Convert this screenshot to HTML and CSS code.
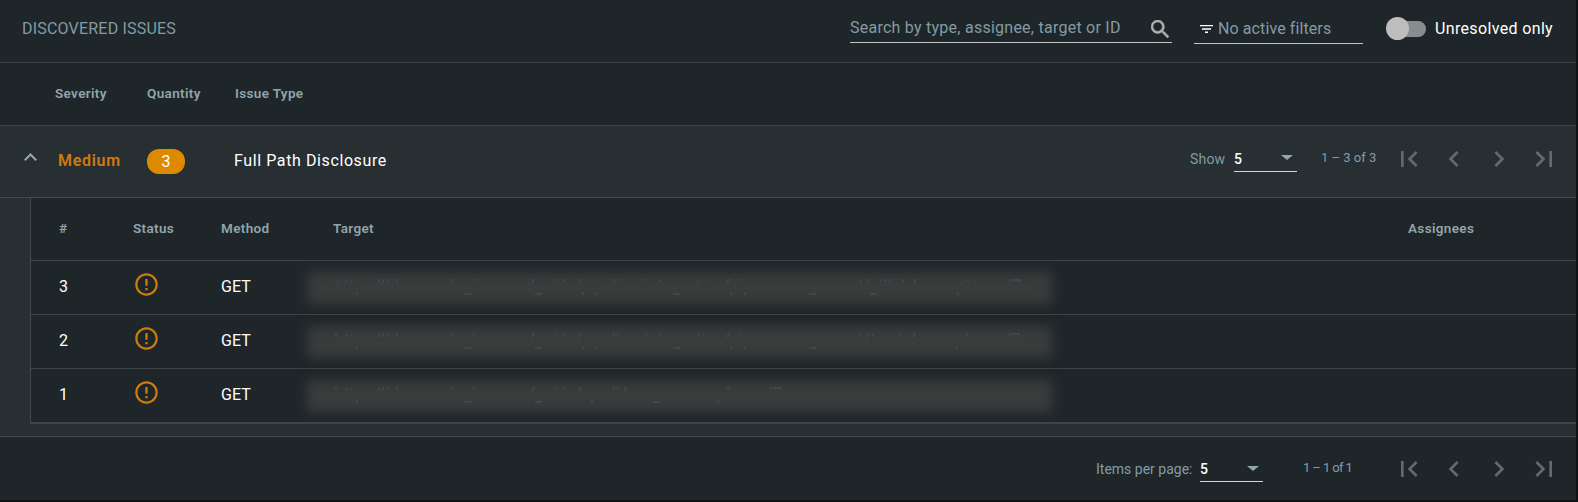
FILE: index.html
```html
<!DOCTYPE html>
<html lang="en">
<head>
<meta charset="utf-8">
<title>Discovered issues</title>
<link rel="stylesheet" href="styles.css">
</head>
<body>
<svg class="defs" width="0" height="0">
  <symbol id="first" viewBox="0 0 24 24"><path d="M18.41 16.59L13.82 12l4.59-4.59L17 6l-6 6 6 6zM6 6h2v12H6z"/></symbol>
  <symbol id="prev" viewBox="0 0 24 24"><path d="M15.41 7.41L14 6l-6 6 6 6 1.41-1.41L10.83 12z"/></symbol>
  <symbol id="next" viewBox="0 0 24 24"><path d="M10 6L8.59 7.41 13.17 12l-4.58 4.59L10 18l6-6z"/></symbol>
  <symbol id="last" viewBox="0 0 24 24"><path d="M5.59 7.41L10.18 12l-4.59 4.59L7 18l6-6-6-6zM16 6h2v12h-2z"/></symbol>
  <symbol id="alert" viewBox="0 0 24 24"><path d="M11 15h2v2h-2zm0-8h2v6h-2zm.99-5C6.47 2 2 6.48 2 12s4.47 10 9.99 10C17.52 22 22 17.52 22 12S17.52 2 11.99 2zM12 20c-4.42 0-8-3.58-8-8s3.58-8 8-8 8 3.58 8 8-3.58 8-8 8z"/></symbol>
</svg>
<main class="panel">
  <header class="toolbar">
    <h1 class="title">DISCOVERED ISSUES</h1>
    <div class="search">
      <span class="search-text">Search by type, assignee, target or ID</span>
      <svg class="search-icon" viewBox="3 3 17.49 17.49"><path d="M15.5 14h-.79l-.28-.27A6.47 6.47 0 0 0 16 9.5 6.5 6.5 0 1 0 9.5 16c1.61 0 3.09-.59 4.23-1.57l.27.28v.79l5 4.99L20.49 19l-4.99-5zm-6 0C7.01 14 5 11.99 5 9.5S7.01 5 9.5 5 14 7.01 14 9.5 11.99 14 9.5 14z"/></svg>
    </div>
    <div class="filter">
      <svg class="filter-icon" viewBox="0 0 13 8"><path d="M0 0h13v1.3H0zM2 3.3h9v1.4H2zM5 6.6h3V8H5z"/></svg>
      <span class="filter-text">No active filters</span>
    </div>
    <div class="toggle"><span class="knob"></span></div>
    <span class="toggle-label">Unresolved only</span>
  </header>

  <div class="columns">
    <span class="c-sev"><b>Severity</b></span>
    <span class="c-qty"><b>Quantity</b></span>
    <span><b>Issue Type</b></span>
  </div>

  <section class="group">
    <svg class="collapse" viewBox="0 0 12 7.4"><path d="M6 0L0 6l1.41 1.4L6 2.83l4.59 4.57L12 6z"/></svg>
    <span class="severity">Medium</span>
    <span class="pill">3</span>
    <span class="issue">Full Path Disclosure</span>
    <div class="pager">
      <span class="show">Show</span>
      <div class="select"><span>5</span><i class="caret"></i></div>
      <span class="range">1 – 3 of 3</span>
      <nav class="nav">
        <svg><use href="#first"/></svg><svg><use href="#prev"/></svg><svg><use href="#next"/></svg><svg><use href="#last"/></svg>
      </nav>
    </div>
  </section>

  <div class="nest">
    <div class="table">
      <div class="row head">
        <b>#</b><b>Status</b><b>Method</b><b>Target</b><b>Assignees</b>
      </div>
      <div class="row">
        <span class="cell">3</span><svg class="alert"><use href="#alert"/></svg><span class="cell">GET</span>
        <div class="masked"><div class="smudge"></div>
          <svg class="traces" viewBox="0 0 700 18"><path class="tick" d="M2 0v3M12 1v2M18 1v2M46 0l-2 4M50 0l-2 4M54 0v3M63 0v3M118 0v3M140 0v2M200 0l-2 4M221 0v2M230 0v3M247 0l-2 4M258 0v2M280 0v3M284 0v2M312 0v2M326 1v2M364 1v2M370 0v2M395 0l-2 4M407 0v2M527 1v2M535 0l-2 4M547 0v2M551 1v2M556 0v3M569 0v3M582 0l-2 4M634 0v3M677 0v3M679 1h7v2M23 13v3M249 13v3M262 13v3M397 13v3M411 13v3M624 13v3M130 15h6l1-1M201 15h6l1-1M339 15h6l1-1M475 15h6l1-1M536 15h6l1-1"/><path class="mid" d="M2 5H686M2 10H686"/></svg></div>
      </div>
      <div class="row">
        <span class="cell">2</span><svg class="alert"><use href="#alert"/></svg><span class="cell">GET</span>
        <div class="masked"><div class="smudge"></div>
          <svg class="traces" viewBox="0 0 700 18"><path class="tick" d="M2 0v3M12 1v2M18 1v2M46 0l-2 4M50 0l-2 4M54 0v3M63 0v3M118 0v3M140 0v2M200 0l-2 4M221 0v2M230 0v3M247 0l-2 4M258 0v2M280 0v3M284 0v2M312 0v2M326 1v2M364 1v2M370 0v2M395 0l-2 4M407 0v2M527 1v2M535 0l-2 4M539 1v2M566 0v2M581 0l-2 4M633 0v3M676 0v3M678 1h7v2M23 13v3M249 13v3M262 13v3M397 13v3M411 13v3M623 13v3M130 15h6l1-1M201 15h6l1-1M339 15h6l1-1M475 15h6l1-1"/><path class="mid" d="M2 5H685M2 10H685"/></svg></div>
      </div>
      <div class="row">
        <span class="cell">1</span><svg class="alert"><use href="#alert"/></svg><span class="cell">GET</span>
        <div class="masked"><div class="smudge"></div>
          <svg class="traces" viewBox="0 0 700 18"><path class="tick" d="M2 0v3M12 1v2M18 1v2M46 0l-2 4M50 0l-2 4M54 0v3M63 0v3M118 0v3M140 0v2M200 0l-2 4M221 0v2M230 0v3M247 0l-2 4M280 0v3M284 0v2M292 0l-2 4M394 0v3M437 0v3M439 1h7v2M23 13v3M258 13v3M384 13v3M130 15h6l1-1M201 15h6l1-1M319 15h6l1-1"/><path class="mid" d="M2 5H446M2 10H446"/></svg></div>
      </div>
    </div>
  </div>

  <footer class="footer">
    <div class="pager">
      <span class="per-page">Items per page:</span>
      <div class="select"><span>5</span><i class="caret"></i></div>
      <span class="range">1 – 1 of 1</span>
      <nav class="nav">
        <svg><use href="#first"/></svg><svg><use href="#prev"/></svg><svg><use href="#next"/></svg><svg><use href="#last"/></svg>
      </nav>
    </div>
  </footer>
</main>
</body>
</html>
```
FILE: styles.css
```css
* { box-sizing: border-box; }
body {
  margin: 0;
  height: 502px;
  overflow: hidden;
  background: #0f1214;
  color: #fff;
  font: 16px/20px Roboto, "Liberation Sans", sans-serif;
  white-space: nowrap;
}
svg { display: block; flex: none; }
.defs { display: none; }
.panel { width: 1576px; height: 500px; background: #1f2629; }

.toolbar {
  display: flex;
  align-items: flex-start;
  height: 63px;
  border-bottom: 1px solid #3b4144;
  color: #839ba5;
}
.title { flex: none; width: 828px; margin: 19px 0 0 22px; font-size: 16px; font-weight: 400; line-height: 20px; letter-spacing: .2px; }
.search { flex: none; display: flex; justify-content: space-between; width: 322px; height: 43px; padding: 18px 3px 0 0; border-bottom: 1px solid #c3c6c7; }
.search-text { letter-spacing: .25px; }
.search-icon { width: 18px; height: 18px; margin-top: 2px; fill: #b0b1b2; stroke: #b0b1b2; stroke-width: .5; }
.filter { flex: none; display: flex; gap: 5px; width: 169px; height: 44px; margin-left: 22px; padding: 19px 0 0 6px; border-bottom: 1px solid #c3c6c7; }
.filter-icon { width: 13px; height: 8px; margin-top: 6px; fill: #fff; }
.filter-text { letter-spacing: .1px; }
.toggle { flex: none; width: 38px; height: 16px; margin: 21px 0 0 25px; border-radius: 8px; background: #8a8d8f; }
.knob { display: block; width: 23px; height: 23px; margin: -4px 0 0 -2px; border-radius: 50%; background: #bdbdbd; }
.toggle-label { margin: 19px 0 0 9px; color: #fff; letter-spacing: .35px; }

.columns { display: flex; align-items: center; height: 63px; padding: 0 0 2px 55px; border-bottom: 1px solid #3b4144; }
b { color: #91a5ad; font-size: 13.5px; font-weight: 600; letter-spacing: .35px; }
.c-sev { width: 92px; letter-spacing: .5px; }
.c-qty { width: 88px; }

.group { display: flex; align-items: center; height: 72px; padding: 0 16px 4px 24px; background: #282f32; border-bottom: 1px solid #43494c; }
.collapse { width: 13px; height: 8px; margin-bottom: 5px; fill: #91a5ad; }
.severity { width: 89px; margin-left: 21px; padding-top: 2px; color: #d17b0b; font-weight: 600; letter-spacing: .7px; }
.pill { width: 38px; height: 25px; margin-top: 4px; border-radius: 12px; background: #de8a00; text-align: center; line-height: 25px; }
.issue { margin-left: 49px; padding-top: 2px; letter-spacing: .6px; }

.pager { display: flex; align-items: center; margin-left: auto; color: #839ba5; font-size: 14px; }
.group .pager { padding-bottom: 2px; }
.show { width: 44px; letter-spacing: .2px; }
.select { display: flex; align-items: center; justify-content: space-between; width: 63px; height: 25px; margin-top: 1px; padding: 0 4px 0 0; border-bottom: 1px solid #d3d6d7; color: #fff; font-weight: 500; }
.caret { border: 6px solid transparent; border-top: 5px solid #91a5ad; border-bottom: 0; margin-bottom: 2px; }
.range { width: 72px; margin-left: 24px; padding-bottom: 2px; font-size: 13px; }
.nav { display: flex; gap: 13px; }
.nav svg { width: 32px; height: 32px; fill: #65696c; }

.nest { height: 239px; padding: 0 0 12px 30px; background: #282f32; border-bottom: 1px solid #43494c; }
.table { height: 226px; background: #1f2629; border-left: 1px solid #43494c; border-bottom: 2px solid #3e4447; }
.row { display: grid; grid-template-columns: 74px 88px 83px 1104px 1fr; align-items: center; height: 54px; padding-left: 28px; border-bottom: 1px solid #3e4447; }
.row.head { height: 63px; padding-bottom: 2px; grid-template-columns: 74px 88px 112px 1075px 1fr; }
.row:last-child { border-color: transparent; }
.cell { padding-bottom: 1px; }
.alert { width: 27px; height: 27px; margin: 0 0 6px 0; fill: #cf7c04; }
.masked { position: relative; }
.smudge { width: 745px; height: 32px; margin: 1px 0 0 3px; background: #3a3c3c; filter: blur(6px); }
/* residual marks of the hidden address, laid over the smudge */
.traces { position: absolute; left: 30px; top: 8px; width: 700px; height: 18px; fill: none; }
.tick { stroke: #474c4e; stroke-width: 1.3; }
.mid { stroke: #414344; stroke-dasharray: 5 3 2 2; opacity: .5; }

.footer { height: 64px; padding: 0 16px 0 0; display: flex; align-items: center; }
.per-page { width: 104px; margin-left: -1px; }
.footer .range { width: 90px; margin-left: 40px; letter-spacing: -.6px; }
```
